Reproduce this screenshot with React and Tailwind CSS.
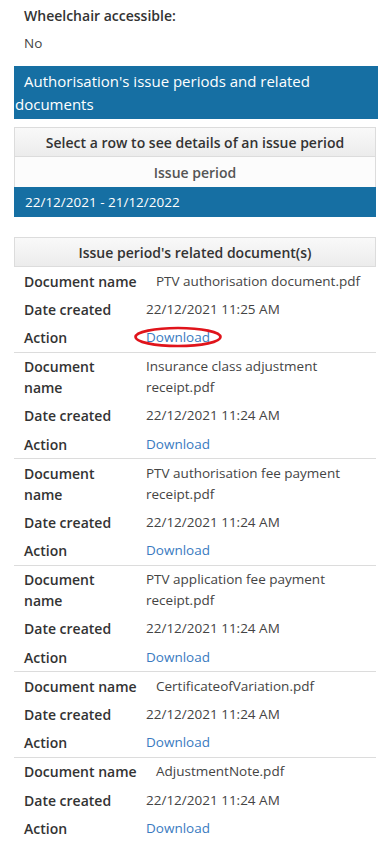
import React from "react";

const docs = [
  { name: "PTV authorisation document.pdf", date: "22/12/2021 11:25 AM", wide: true, circled: true },
  { name: "Insurance class adjustment receipt.pdf", date: "22/12/2021 11:24 AM" },
  { name: "PTV authorisation fee payment receipt.pdf", date: "22/12/2021 11:24 AM" },
  { name: "PTV application fee payment receipt.pdf", date: "22/12/2021 11:24 AM" },
  { name: "CertificateofVariation.pdf", date: "22/12/2021 11:24 AM", wide: true },
  { name: "AdjustmentNote.pdf", date: "22/12/2021 11:24 AM", wide: true },
];

function Row({ label, children, wide }) {
  return (
    <div className="flex items-start py-[3.6px] leading-[21px]">
      <div
        className={
          wide
            ? "w-[142px] shrink-0 pl-[10px] font-semibold text-[#333] whitespace-nowrap"
            : "w-[132px] shrink-0 pl-[10px] pr-[16px] font-semibold text-[#333]"
        }
      >
        {label}
      </div>
      <div className="flex-1 text-[#444] text-[13.5px] pr-[8px]">{children}</div>
    </div>
  );
}

export default function App() {
  return (
    <div className="w-[390px] min-h-[843px] bg-white font-['Open_Sans',sans-serif] text-[14px] text-[#333] px-[14px] pt-[5px] overflow-hidden">
      <div className="pl-[10px] font-semibold leading-[21px]">Wheelchair accessible:</div>
      <div className="pl-[10px] mt-[7px] leading-[21px] text-[#444] text-[13.5px]">No</div>

      <div className="mt-[12px] mr-[-2px] bg-[#166fa3] text-white text-[15px] leading-[23px] pt-[4px] pb-[3px] pl-[1px] indent-[9px]">
        Authorisation's issue periods and related documents
      </div>

      <div className="mt-[8px] border-x border-t border-[#dcdcdc]">
        <div className="h-[29px] flex items-center justify-center font-semibold text-[#333] bg-gradient-to-b from-[#f9f9f9] to-[#ececec] border-b border-[#dcdcdc]">
          Select a row to see details of an issue period
        </div>
        <div className="h-[30px] flex items-center justify-center font-semibold text-[#555] bg-[#fcfcfc]">
          Issue period
        </div>
      </div>
      <div className="h-[30px] flex items-center bg-[#166fa3] text-white text-[13.5px] pl-[11px]">
        22/12/2021 - 21/12/2022
      </div>

      <div className="mt-[20px] h-[30px] flex items-center justify-center font-semibold text-[#333] bg-gradient-to-b from-[#f9f9f9] to-[#ececec] border border-[#dcdcdc]">
        Issue period's related document(s)
      </div>

      {docs.map((d, i) => (
        <div
          key={i}
          className={i < docs.length - 1 ? "border-b border-[#dcdcdc]" : ""}
        >
          <Row label="Document name" wide={d.wide}>
            {d.name}
          </Row>
          <Row label="Date created">{d.date}</Row>
          <Row label="Action">
            <span className="relative inline-block">
              <a href="#" className="text-[#3a7bbf]">
                Download
              </a>
              {d.circled && (
                <svg
                  className="absolute left-[-12px] top-[-0.5px] pointer-events-none"
                  width="90"
                  height="22"
                  viewBox="0 0 90 22"
                >
                  <ellipse
                    cx="44"
                    cy="11"
                    rx="42.5"
                    ry="9"
                    fill="none"
                    stroke="#e0141b"
                    strokeWidth="2.7"
                  />
                </svg>
              )}
            </span>
          </Row>
        </div>
      ))}
    </div>
  );
}
